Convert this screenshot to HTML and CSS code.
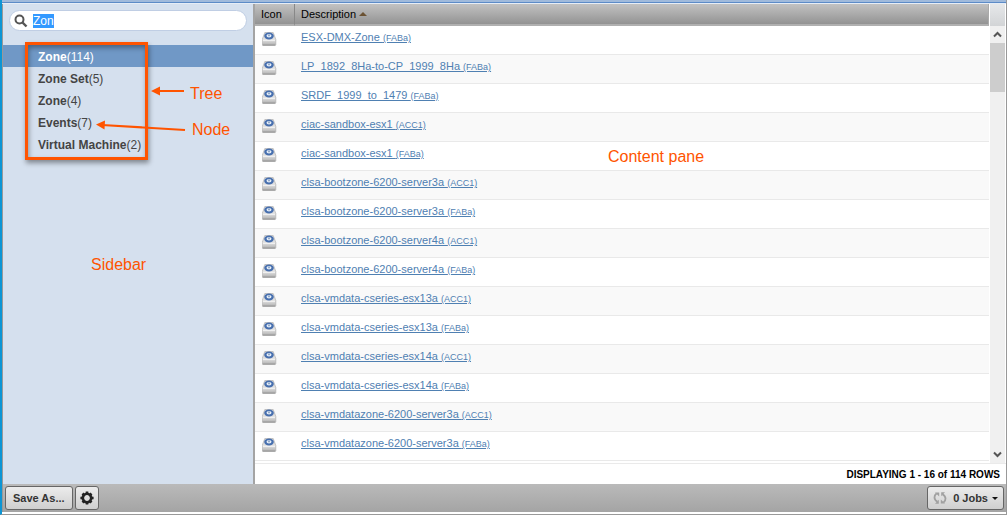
FILE: index.html
```
<!DOCTYPE html>
<html lang="en">
<head>
<meta charset="utf-8">
<title>Zones</title>
<link rel="stylesheet" href="styles.css">
</head>
<body>
<svg class="defs" aria-hidden="true">
  <defs>
    <linearGradient id="metal" x1="0" y1="0" x2="0" y2="1"><stop offset="0" stop-color="#e4e4e4"/><stop offset=".6" stop-color="#dedede"/><stop offset="1" stop-color="#acacac"/></linearGradient>
    <symbol id="zone" viewBox="0 0 16 16">
      <path d="M2.800 1.500h8.400l2.600 7v5q0 1-1 1H1.200q-1 0-1-1v-5z" fill="url(#metal)" stroke="#b0b0b0" stroke-width=".7"/>
      <path d="M1 9.300h12" stroke="#f6f6f6"/>
      <path d="M.8 14h12.400" stroke="#999"/>
      <ellipse cx="7" cy="5" rx="4.800" ry="3.400" fill="#476fae"/>
      <ellipse cx="7" cy="4.800" rx="2.500" ry="1.700" fill="#e6eef8"/>
      <path d="M6.400 3.500h1.200v1.800H6.400z" fill="#5d7fae"/>
    </symbol>
  </defs>
</svg>
<div class="app">
  <div class="topline"></div>
  <div class="main">
    <aside class="sidebar">
      <label class="search">
        <svg width="14" height="14" viewBox="0 0 14 14" aria-hidden="true"><circle cx="5.500" cy="5.500" r="4" fill="none" stroke="#555" stroke-width="2"/><path d="M8.500 8.500l4 4" stroke="#555" stroke-width="2.400"/></svg>
        <input id="query" type="text" value="Zon" aria-label="Search">
      </label>
      <nav class="tree">
        <a class="node selected" href="#"><b>Zone</b>(114)</a>
        <a class="node" href="#"><b>Zone Set</b>(5)</a>
        <a class="node" href="#"><b>Zone</b>(4)</a>
        <a class="node" href="#"><b>Events</b>(7)</a>
        <a class="node" href="#"><b>Virtual Machine</b>(2)</a>
      </nav>
      <div class="tree-box"></div>
      <svg class="arrows" width="130" height="60" viewBox="0 0 130 60" aria-hidden="true">
        <g stroke="#ff5400" stroke-width="2.200"><path d="M68 11h29M15 45l83 5"/></g>
        <path d="M64 11l9-4.500v9zM9 44.600l9-4-.5 8.800z" fill="#ff5400"/>
      </svg>
      <span class="note note-tree">Tree</span>
      <span class="note note-node">Node</span>
      <span class="note note-sidebar">Sidebar</span>
    </aside>
    <section class="content">
      <div class="grid">
        <div class="scroll-area">
          <table class="zones">
            <thead><tr><th class="col-icon">Icon</th><th>Description <svg width="8" height="4" viewBox="0 0 8 4" aria-hidden="true"><path d="M0 4l4-4 4 4z" fill="#6b5233"/></svg></th></tr></thead>
            <tbody>
              <tr><td><svg class="icon"><use href="#zone"/></svg></td><td><a href="#">ESX-DMX-Zone <small>(FABa)</small></a></td></tr>
              <tr><td><svg class="icon"><use href="#zone"/></svg></td><td><a href="#">LP_1892_8Ha-to-CP_1999_8Ha <small>(FABa)</small></a></td></tr>
              <tr><td><svg class="icon"><use href="#zone"/></svg></td><td><a href="#">SRDF_1999_to_1479 <small>(FABa)</small></a></td></tr>
              <tr><td><svg class="icon"><use href="#zone"/></svg></td><td><a href="#">ciac-sandbox-esx1 <small>(ACC1)</small></a></td></tr>
              <tr><td><svg class="icon"><use href="#zone"/></svg></td><td><a href="#">ciac-sandbox-esx1 <small>(FABa)</small></a></td></tr>
              <tr><td><svg class="icon"><use href="#zone"/></svg></td><td><a href="#">clsa-bootzone-6200-server3a <small>(ACC1)</small></a></td></tr>
              <tr><td><svg class="icon"><use href="#zone"/></svg></td><td><a href="#">clsa-bootzone-6200-server3a <small>(FABa)</small></a></td></tr>
              <tr><td><svg class="icon"><use href="#zone"/></svg></td><td><a href="#">clsa-bootzone-6200-server4a <small>(ACC1)</small></a></td></tr>
              <tr><td><svg class="icon"><use href="#zone"/></svg></td><td><a href="#">clsa-bootzone-6200-server4a <small>(FABa)</small></a></td></tr>
              <tr><td><svg class="icon"><use href="#zone"/></svg></td><td><a href="#">clsa-vmdata-cseries-esx13a <small>(ACC1)</small></a></td></tr>
              <tr><td><svg class="icon"><use href="#zone"/></svg></td><td><a href="#">clsa-vmdata-cseries-esx13a <small>(FABa)</small></a></td></tr>
              <tr><td><svg class="icon"><use href="#zone"/></svg></td><td><a href="#">clsa-vmdata-cseries-esx14a <small>(ACC1)</small></a></td></tr>
              <tr><td><svg class="icon"><use href="#zone"/></svg></td><td><a href="#">clsa-vmdata-cseries-esx14a <small>(FABa)</small></a></td></tr>
              <tr><td><svg class="icon"><use href="#zone"/></svg></td><td><a href="#">clsa-vmdatazone-6200-server3a <small>(ACC1)</small></a></td></tr>
              <tr><td><svg class="icon"><use href="#zone"/></svg></td><td><a href="#">clsa-vmdatazone-6200-server3a <small>(FABa)</small></a></td></tr>
            </tbody>
          </table>
        </div>
        <div class="scrollbar">
          <div class="scroll-head"></div>
          <div class="scroll-arrow"><svg width="9" height="7" viewBox="0 0 9 7"><path d="M1 5.500l3.500-3.500L8 5.500" fill="none" stroke="#555" stroke-width="2"/></svg></div>
          <div class="thumb"></div>
          <div class="track"></div>
          <div class="scroll-arrow"><svg width="9" height="7" viewBox="0 0 9 7"><path d="M1 1.500l3.500 3.500L8 1.500" fill="none" stroke="#555" stroke-width="2"/></svg></div>
        </div>
      </div>
      <div class="status">DISPLAYING 1 - 16 of 114 ROWS</div>
      <span class="note note-content">Content pane</span>
    </section>
  </div>
  <footer class="toolbar">
    <button class="btn" type="button">Save As...</button>
    <button class="btn gear" type="button" aria-label="Settings"><svg width="14" height="14" viewBox="-7 -7 14 14"><g fill="none" stroke="#222"><circle r="4.200" stroke-width="2.600"/><path d="M0-6.600V-5M0 6.600V5M-6.600 0H-5M6.600 0H5M-4.500-4.500l1 1M4.500 4.500l-1-1M-4.500 4.500l1-1M4.500-4.500l-1 1" stroke-width="2.600"/></g></svg></button>
    <button class="btn jobs" type="button"><svg width="14" height="12" viewBox="0 0 14 12" aria-hidden="true"><path d="M3.500 1.500Q1.500 3 1.500 5.500T4.500 9.800M10.500 10.500q2-1.500 2-4T9.500 2.200" fill="none" stroke="#a0a0a0" stroke-width="1.800"/><path d="M2 .5h4.200v4zM12 11.500H7.800v-4zM5.800 7.800v4H2zM8.200 4.200v-4H12z" fill="#a0a0a0"/></svg>0 Jobs<svg width="6" height="3" viewBox="0 0 6 3" aria-hidden="true"><path d="M0 0h6L3 3z" fill="#111"/></svg></button>
  </footer>
</div>
<script src="app.js"></script>
</body>
</html>
```
FILE: styles.css
```
* { box-sizing: border-box; }
body {
  margin: 0;
  font: 11px/14px "Liberation Sans", Arial, sans-serif;
  color: #000;
  background: #fff;
}
.defs { position: absolute; width: 0; height: 0; }
.app {
  display: flex;
  flex-direction: column;
  height: 100vh;
  border-left: 2px solid #0d95d4;
  border-right: 1px solid #999;
  border-bottom: 1px solid #999;
  padding-bottom: 2px;
}
.topline { height: 4px; background: #a0badb; border-bottom: 1px solid #e6edf6; box-shadow: inset 0 -1px #5c8bc7; flex: none; }
.main { display: flex; flex: 1; min-height: 0; border-left: 1px solid #999; }

.sidebar {
  position: relative;
  flex: none;
  width: 252px;
  background: #d5e0ee;
  border-right: 2px solid #a4a4a4;
  padding-top: 6px;
}
.search {
  display: flex;
  align-items: center;
  gap: 5px;
  height: 21px;
  margin: 0 6px;
  padding: 0 4px;
  background: #fff;
  border: 1px solid #c0cee4;
  border-radius: 11px;
}
.search svg { flex: none; }
.search input {
  flex: 1;
  min-width: 0;
  border: 0;
  outline: 0;
  padding: 1px 0 0;
  background: none;
  font: 12px/14px "Liberation Sans", Arial, sans-serif;
}
.search input::selection { background: #3399ff; color: #fff; }
.tree { margin-top: 14px; }
.node {
  display: block;
  height: 22px;
  padding-left: 35px;
  font-size: 12px;
  line-height: 24px;
  color: #444;
  text-decoration: none;
}
.selected { background: #7098c6; color: #fff; }

.tree-box {
  position: absolute;
  left: 22px;
  top: 38px;
  width: 123px;
  height: 118px;
  border: 3px solid #ff5400;
  box-shadow: 1px 3px 5px rgba(0, 0, 0, .4), inset 1px 3px 5px rgba(0, 0, 0, .35);
}
.arrows { position: absolute; left: 84px; top: 76px; }
.note { position: absolute; font-size: 16px; line-height: 20px; color: #ff5400; }
.note-tree { left: 187px; top: 80px; }
.note-node { left: 189px; top: 116px; }
.note-sidebar { left: 88px; top: 251px; }
.note-content { left: 353px; top: 143px; }

.content { position: relative; flex: 1; min-width: 0; display: flex; flex-direction: column; }
.grid { display: flex; flex: 1; min-height: 0; border-bottom: 1px solid #eaeaea; }
.scroll-area { flex: 1; min-width: 0; overflow: hidden; }
.zones { width: 100%; border-collapse: separate; border-spacing: 0; }
.zones th {
  height: 22px;
  padding: 0 6px;
  text-align: left;
  font-weight: normal;
  background: linear-gradient(#c2c2c2, #939393);
  border-right: 1px solid #aaa;
  border-bottom: 2px solid #b0b0b0;
}
.zones .col-icon { width: 40px; border-right-color: #888; }
.zones th svg { vertical-align: 2px; }
.zones td { height: 29px; padding: 0 6px; border-bottom: 1px solid #e9e9e9; vertical-align: top; }
.zones td + td { padding-top: 4px; }
.zones tr:nth-child(even) td { background: #f9f9f9; }
.zones a { color: #4f80b2; }
.zones small { font-size: 9px; }
.icon { display: block; width: 16px; height: 16px; margin: 5px 0 0 1px; }
.scrollbar { flex: none; width: 17px; display: flex; flex-direction: column; background: #f0f0f0; border-left: 1px solid #fff; border-right: 1px solid #fff; }
.scroll-head { height: 22px; background: linear-gradient(#e6e8ea, #d2d4d6); }
.scroll-arrow { height: 17px; display: flex; align-items: center; justify-content: center; }
.thumb { height: 49px; background: #cdcdcd; }
.track { flex: 1; }
.status { flex: none; height: 20px; padding-right: 6px; text-align: right; font-size: 10px; line-height: 21px; font-weight: bold; }

.toolbar {
  flex: none;
  display: flex;
  align-items: center;
  gap: 2px;
  height: 28px;
  padding: 0 2px;
  background: linear-gradient(#bababa, #a4a4a4);
  border-left: 1px solid #999;
}
.btn {
  display: flex;
  align-items: center;
  justify-content: center;
  gap: 6px;
  height: 24px;
  padding: 0 7px;
  border: 1px solid #666;
  border-radius: 3px;
  background: linear-gradient(#ececec, #cfcfcf);
  font: bold 11px/14px "Liberation Sans", Arial, sans-serif;
  color: #333;
}
.gear { padding: 0 4px; }
.jobs { margin-left: auto; padding: 0 5px; }
.jobs svg:last-child { margin-left: -2px; }
```
FILE: app.js
```
const query = document.getElementById('query');
query.focus();
query.select();
```
